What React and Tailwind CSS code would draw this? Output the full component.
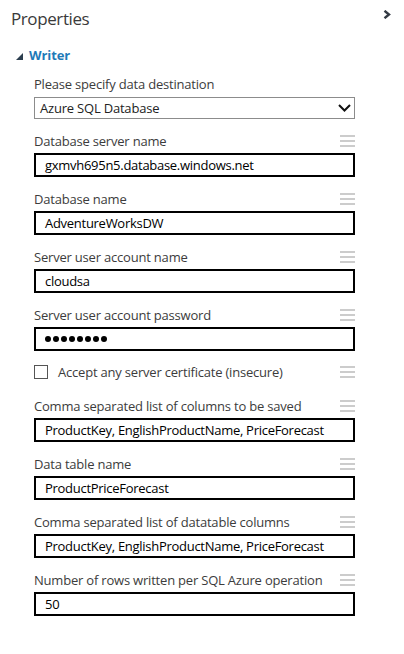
function Grip() {
  return (
    <div className="flex flex-col gap-[3px] w-[15px] shrink-0">
      <div className="h-[2px] bg-[#cccccc]" />
      <div className="h-[2px] bg-[#cccccc]" />
      <div className="h-[2px] bg-[#cccccc]" />
    </div>
  )
}

function Field({ label, value, password }) {
  return (
    <div className="flex flex-col">
      <div className="flex items-center justify-between h-[20px]">
        <span className="text-[13px] leading-[20px] tracking-[-0.2px] text-[#3c3c3c]">{label}</span>
        <Grip />
      </div>
      <div className="mt-[2px] h-[24px] border-2 border-black flex items-center pl-[9px]">
        {password ? (
          <div className="flex gap-[2px]">
            {Array.from({ length: 8 }).map((_, i) => (
              <span key={i} className="w-[6px] h-[6px] rounded-full bg-black" />
            ))}
          </div>
        ) : (
          <span className="text-[13px] leading-[20px] tracking-[-0.28px] text-black">{value}</span>
        )}
      </div>
    </div>
  )
}

export default function App() {
  return (
    <div className="w-[404px] h-[654px] bg-white font-['Open_Sans',sans-serif] flex flex-col">
      <div className="flex justify-between items-start pl-[11px] pr-[13px] pt-[7px]">
        <h1 className="text-[17px] leading-[24px] tracking-[-0.4px] text-[#3a3a3a]">Properties</h1>
        <svg width="8" height="9" viewBox="0 0 8 9" className="mt-[3px]">
          <path d="M1.5 0.8 L6 4.5 L1.5 8.2" fill="none" stroke="#333a44" strokeWidth="2.4" />
        </svg>
      </div>

      <div className="flex items-center mt-[14px] pl-[16px] h-[20px]">
        <svg width="7" height="7" viewBox="0 0 7 7" className="mt-[3px]">
          <path d="M7 0 L7 7 L0 7 Z" fill="#2c3e4f" />
        </svg>
        <span className="ml-[6px] text-[13px] leading-[20px] tracking-[-0.1px] font-bold text-[#1f7ab8]">Writer</span>
      </div>

      <div className="flex flex-col ml-[34px] w-[321px] mt-[9px]">
        <div className="h-[20px] text-[13px] leading-[20px] tracking-[-0.2px] text-[#3c3c3c]">Please specify data destination</div>
        <div className="mt-[3px] h-[22px] border border-[#8c8c8c] flex items-center justify-between pl-[5px] pr-[3px]">
          <span className="text-[13px] leading-[20px] tracking-[-0.2px] text-[#222222]">Azure SQL Database</span>
          <svg width="13" height="8" viewBox="0 0 13 8">
            <path d="M1 1 L6.5 6.5 L12 1" fill="none" stroke="#111111" strokeWidth="2" />
          </svg>
        </div>

        <div className="flex flex-col gap-[12px] mt-[12px]">
          <Field label="Database server name" value="gxmvh695n5.database.windows.net" />
          <Field label="Database name" value="AdventureWorksDW" />
          <Field label="Server user account name" value="cloudsa" />
          <Field label="Server user account password" password />
        </div>

        <div className="flex items-center justify-between h-[20px] mt-[11px]">
          <label className="flex items-center">
            <span className="w-[14px] h-[14px] border border-[#555555] bg-white" />
            <span className="ml-[10px] text-[13px] leading-[20px] tracking-[-0.2px] text-[#3c3c3c]">Accept any server certificate (insecure)</span>
          </label>
          <Grip />
        </div>

        <div className="flex flex-col gap-[12px] mt-[14px]">
          <Field label="Comma separated list of columns to be saved" value="ProductKey, EnglishProductName, PriceForecast" />
          <Field label="Data table name" value="ProductPriceForecast" />
          <Field label="Comma separated list of datatable columns" value="ProductKey, EnglishProductName, PriceForecast" />
          <Field label="Number of rows written per SQL Azure operation" value="50" />
        </div>
      </div>
    </div>
  )
}
